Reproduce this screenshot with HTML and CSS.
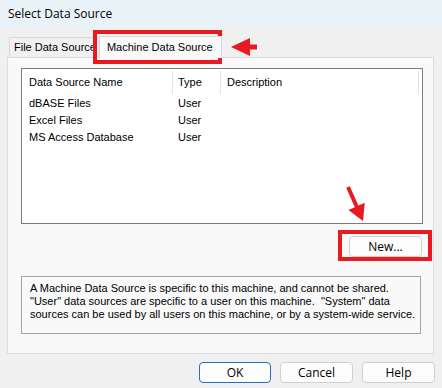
FILE: index.html
```html
<!DOCTYPE html>
<html lang="en">
  <head>
    <meta charset="UTF-8" />
    <title>Select Data Source</title>
    <link rel="stylesheet" href="styles.css">
  </head>
  <body>
    <div class="window">
      <div class="titlebar">Select Data Source</div>

      <div class="tabs">
        <div class="tab">File Data Source</div>
        <div class="tab active">Machine Data Source</div>
      </div>

      <div class="panel">
        <div class="listview">
          <div class="lv-header">
            <div class="col name">Data Source Name</div>
            <div class="col type">Type</div>
            <div class="col desc">Description</div>
          </div>
          <div class="lv-row">
            <div class="col name">dBASE Files</div>
            <div class="col type">User</div>
          </div>
          <div class="lv-row">
            <div class="col name">Excel Files</div>
            <div class="col type">User</div>
          </div>
          <div class="lv-row">
            <div class="col name">MS Access Database</div>
            <div class="col type">User</div>
          </div>
        </div>

        <div class="new-row">
          <button class="btn new">New...</button>
        </div>

        <div class="info">
          A Machine Data Source is specific to this machine, and cannot be shared.<br>
          "User" data sources are specific to a user on this machine.&nbsp; "System" data<br>
          sources can be used by all users on this machine, or by a system-wide service.
        </div>
      </div>

      <div class="buttons">
        <button class="btn default">OK</button>
        <button class="btn">Cancel</button>
        <button class="btn">Help</button>
      </div>

      <!-- annotations -->
      <div class="mark mark-tab"></div>
      <div class="mark mark-new"></div>
      <svg class="arrow arrow-left" width="32" height="22" viewBox="0 0 32 22">
        <polygon points="3,10 22,1 22,7.5 29,7.5 29,12.5 22,12.5 22,19" fill="#e8191f" />
      </svg>
      <svg class="arrow arrow-down" width="30" height="42" viewBox="0 0 30 42">
        <polygon points="9.8,3.2 18.4,22.6 24.8,19.8 23,38 8.4,27 14.8,24.2 6.2,4.8" fill="#e8191f" />
      </svg>
    </div>
  </body>
</html>
```

FILE: styles.css
```css
body {
  margin: 0;
  font-family: 'Liberation Sans', Arial, sans-serif;
  font-size: 11px;
  color: #000;
}

.window {
  position: relative;
  width: 442px;
  height: 388px;
  background: #f0f0f0;
  overflow: hidden;
}

.titlebar {
  height: 28px;
  line-height: 28px;
  padding-left: 8px;
  background: #e9f3f7;
  font-family: 'Segoe UI', 'Open Sans', sans-serif;
  font-size: 12px;
}

.tabs {
  display: flex;
  align-items: flex-end;
  height: 21px;
  margin: 8px 0 0 9px;
}

.tab {
  height: 19px;
  line-height: 19px;
  padding: 0 6px 0 4px;
  border: 1px solid #d9d9d9;
  border-bottom: none;
  background: #f0f0f0;
}

.tab.active {
  height: 21px;
  line-height: 21px;
  margin-left: -4px;
  padding: 0 8px 0 7px;
  background: #f9f9f9;
  position: relative;
  z-index: 1;
  margin-bottom: -1px;
}

.panel {
  width: 425px;
  height: 295px;
  margin-left: 7px;
  background: #f9f9f9;
  border: 1px solid #dcdcdc;
  display: flex;
  flex-direction: column;
  align-items: flex-start;
}

.listview {
  width: 400px;
  height: 154px;
  margin: 10px 0 0 13px;
  background: #fff;
  border: 1px solid #7a7a80;
  position: relative;
}

.listview::after {
  content: '';
  position: absolute;
  left: 396px;
  top: 2px;
  width: 1px;
  height: 23px;
  background: #e5e5e5;
}

.lv-header {
  display: flex;
  height: 26px;
}

.lv-header .col {
  border-right: 1px solid #e5e5e5;
  margin-top: 2px;
  height: 23px;
  line-height: 23px;
}

.lv-row {
  display: flex;
  height: 17px;
  line-height: 17px;
}

.col {
  box-sizing: border-box;
  white-space: nowrap;
}

.col.name {
  width: 151px;
  padding-left: 7px;
}

.col.type {
  width: 48px;
  padding-left: 5px;
}

.col.desc {
  width: 60px;
  padding-left: 6px;
  border-right: none;
}

.new-row {
  align-self: stretch;
  display: flex;
  justify-content: flex-end;
  padding-right: 11px;
  margin-top: 12px;
}

.btn {
  font-family: 'Segoe UI', 'Open Sans', sans-serif;
  font-size: 12px;
  width: 73px;
  height: 21px;
  padding: 0;
  background: #fdfdfd;
  border: 1px solid #d0d0d0;
  border-radius: 4px;
  color: #000;
}

.btn.default {
  width: 72px;
  border-color: #1f6fc5;
}

.info {
  width: 390px;
  height: 51px;
  margin: 19px 0 0 13px;
  padding: 5px 0 0 8px;
  border: 1px solid #a5a5a5;
  line-height: 13px;
  white-space: nowrap;
}

.buttons {
  display: flex;
  justify-content: flex-end;
  gap: 9px;
  padding: 8px 7px 0 0;
}

.mark {
  position: absolute;
  border: 4px solid #e8191f;
  box-sizing: border-box;
}

.mark-tab {
  left: 93px;
  top: 30px;
  width: 129px;
  height: 34px;
}

.mark-new {
  left: 338px;
  top: 230px;
  width: 94px;
  height: 31px;
}

.arrow {
  position: absolute;
}

.arrow-left {
  left: 228px;
  top: 37px;
}

.arrow-down {
  left: 340px;
  top: 183px;
}
```
